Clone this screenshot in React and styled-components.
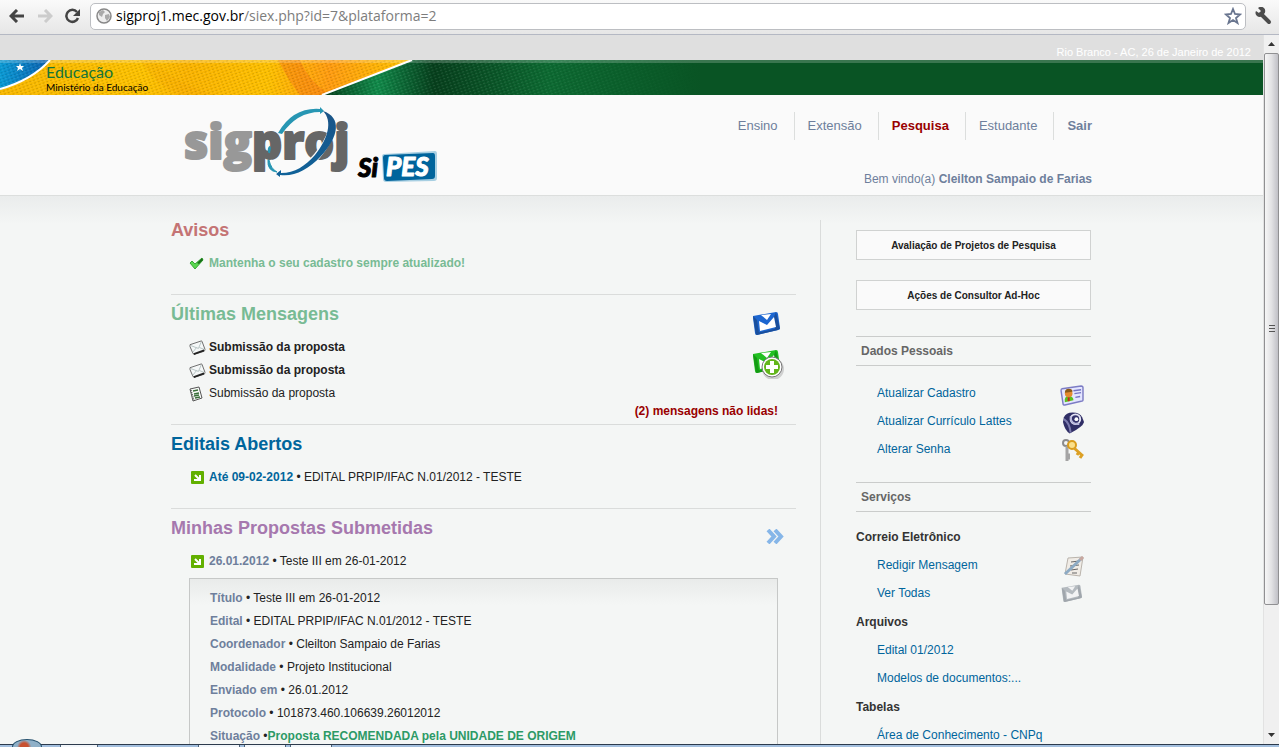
import React from 'react';
import styled, { createGlobalStyle } from 'styled-components';

const GlobalStyle = createGlobalStyle`
    * {
        box-sizing: border-box;
    }
    body {
        margin: 0;
        overflow: hidden;
        font-family: "Liberation Sans", Arial, sans-serif;
        font-size: 12px;
        line-height: 15px;
        color: #222;
    }
    ul, h1, h2, h3, p {
        margin: 0;
        padding: 0;
        list-style: none;
    }
    svg {
        display: block;
        flex: none;
    }
`

/* browser window */

const Window = styled.div`
    display: flex;
    flex-direction: column;
    height: 100vh;
`
const Toolbar = styled.div`
    display: flex;
    align-items: center;
    gap: 6px;
    height: 35px;
    flex: none;
    padding: 0 5px 2px 6px;
    background: linear-gradient(#fafafa, #e6e6e6);
    border-bottom: 1px solid #b4b8c3;
`
const ToolButton = styled.button`
    display: flex;
    align-items: center;
    justify-content: center;
    width: 22px;
    height: 24px;
    padding: 0;
    border: 0;
    background: none;
`
const AddressBar = styled.div`
    flex: 1;
    display: flex;
    align-items: center;
    height: 27px;
    padding: 0 1px 0 5px;
    background: #fff;
    border: 1px solid #bcbec2;
    border-radius: 5px;
    font: 14px/22px "Open Sans", "Noto Sans", sans-serif;
`
const Domain = styled.label`
    margin-left: 4px;
    color: #000;
`
const Path = styled.input`
    flex: 1;
    min-width: 0;
    padding: 0;
    border: 0;
    outline: 0;
    background: none;
    font: inherit;
    color: #7d7d7d;
`
const Viewport = styled.div`
    flex: 1;
    min-height: 0;
    display: flex;
`
const Page = styled.div`
    flex: 1;
    min-width: 0;
    overflow: hidden;
    background: #f4f6f5;
`
const Scrollbar = styled.div`
    flex: none;
    width: 16px;
    display: flex;
    flex-direction: column;
    background: #f0f0f0;
    border-left: 1px solid #e2e2e2;
`
const ScrollArrow = styled.button`
    display: flex;
    align-items: center;
    justify-content: center;
    height: 18px;
    padding: 0;
    border: 0;
    background: none;
`
const Track = styled.div`
    flex: 1;
`
const Thumb = styled.div`
    display: flex;
    align-items: center;
    justify-content: center;
    height: 82%;
    border: 1px solid #909092;
    border-radius: 2px;
    background: linear-gradient(90deg, #f6f6f6, #e2e2e4 50%, #c0c0c6);
`
const Taskbar = styled.div`
    position: relative;
    display: flex;
    gap: 4px;
    flex: none;
    height: 3px;
    padding-left: 60px;
    background: #a3bfde;
    border-top: 1px solid #2c3a4c;
`
const StartOrb = styled.div`
    position: absolute;
    left: 12px;
    bottom: 0;
    width: 30px;
    height: 8px;
    border: 1px solid #24506e;
    border-bottom: 0;
    border-radius: 15px 15px 0 0 / 8px 8px 0 0;
    background: radial-gradient(circle at 40% 100%, #c85030 4px, #8fb0c8 7px);
`
const Task = styled.div`
    width: ${props => props.$wide ? '42px' : '38px'};
    background: #f2f6fa;
    border: solid #4c6278;
    border-width: 0 1px;

    &:nth-child(3) {
        margin-left: 96px;
    }
`

/* page header */

const DateBar = styled.div`
    height: 25px;
    padding: 10px 12px 0;
    background: #dfdfdf;
    color: #fff;
    font-size: 11px;
    text-align: right;
`
const Banner = styled.div`
    position: relative;
    height: 35px;
    overflow: hidden;
    background: #095424;
`
const BannerStripe = styled.div`
    position: absolute;
    inset: 0 0 auto;
    height: 3px;
    background: rgba(255, 255, 255, .2);
`
const Ministry = styled.div`
    position: absolute;
    left: 46px;
    top: 2px;
    font-family: Lato, sans-serif;
`
const MinistryArea = styled.p`
    font-size: 16px;
    line-height: 19px;
    color: #15743a;
`
const MinistryName = styled.p`
    font-size: 10px;
    line-height: 12px;
    color: #000;
`
const Header = styled.header`
    background: #fafafa;
    border-bottom: 1px solid #dcdedd;
`
const Container = styled.div`
    display: flex;
    justify-content: space-between;
    width: 921px;
    max-width: 100%;
    margin: 0 auto;
`
const HeaderRight = styled.div`
    display: flex;
    flex-direction: column;
    align-items: flex-end;
    justify-content: space-between;
    height: 100px;
    padding: 17px 0 8px;
`
const Nav = styled.nav`
    display: flex;
`
const NavLink = styled.a`
    padding: 0 16px 0 13px;
    font-size: 13px;
    line-height: 28px;
    text-decoration: none;
    font-weight: ${props => props.$bold ? 'bold' : 'normal'};
    color: ${props => props.$active ? '#990000' : '#6e7f9c'};

    & + & {
        border-left: 1px solid #dcdedd;
    }
    &:last-child {
        padding-right: 0;
    }
`
const Welcome = styled.p`
    color: #6e7f9c;
`

/* columns */

const Body = styled.div`
    background: linear-gradient(#eaecec, #f4f6f5 28px);
    padding-top: 24px;
`
const Main = styled.main`
    flex: 1;
    margin-right: 24px;
`
const Sidebar = styled.aside`
    width: 272px;
    flex: none;
    padding: 10px 1px 0 35px;
    border-left: 1px solid #dadcdb;
`
const Section = styled.section`
    display: flex;
    justify-content: space-between;
    height: ${props => props.$height};
    border-bottom: ${props => props.$last ? '0' : '1px solid #dadcdb'};
    padding-top: ${props => props.$first ? '0' : '9px'};
`
const Title = styled.h2`
    font-size: 18px;
    line-height: 20px;
    color: ${props => props.color};
    margin-bottom: 12px;
`
const Item = styled.li`
    display: flex;
    align-items: center;
    gap: 4px;
    height: 23px;
    padding-left: 18px;
    font-weight: ${props => props.$bold ? 'bold' : 'normal'};
    color: ${props => props.color || '#222'};
`
const IconCell = styled.span`
    display: flex;
    width: 16px;
`
const Label = styled.b`
    color: ${props => props.color || '#6e7f9c'};
`
const SectionActions = styled.div`
    display: flex;
    flex-direction: column;
    align-items: flex-end;
    justify-content: space-between;
    padding: ${props => props.$low ? '11px' : '7px'} 12px 5px 0;
`
const ActionIcons = styled.div`
    display: flex;
    flex-direction: column;
    gap: 8px;
`
const Unread = styled.p`
    margin-right: 6px;
    color: #990000;
    font-weight: bold;
`
const Proposal = styled.ul`
    margin: 5px 18px 0;
    padding: 8px 20px 20px;
    border: 1px solid #c6c8c7;
    background: linear-gradient(#e9ebea, #f4f6f5 26px);
    line-height: 23px;
`

const BoxButton = styled.button`
    display: block;
    width: 100%;
    height: 30px;
    margin-bottom: 20px;
    padding: 0;
    border: 1px solid #d0d2d1;
    background: #fafafa;
    color: #222;
    font: bold 10px "Liberation Sans", Arial, sans-serif;
`
const SideTitle = styled.h2`
    height: 30px;
    margin: ${props => props.$margin};
    padding-left: 5px;
    border: solid #cacccb;
    border-width: 1px 0;
    font-size: 12px;
    line-height: 28px;
    color: #666;
`
const SideGroup = styled.h3`
    font-size: 12px;
    line-height: 28px;
    color: #333;
`
const Links = styled.ul`
    padding-bottom: 1px;
`
const SideItem = styled.li`
    display: flex;
    align-items: center;
    justify-content: space-between;
    height: 28px;
    padding: 0 6px 0 21px;
`
const SideLink = styled.a`
    color: #00659c;
    text-decoration: none;
`
const SideIcon = styled.span`
    padding-top: 4px;
`

const BannerArt = () => (
    <svg width="760" height="35" viewBox="0 0 760 35">
        <defs>
            <linearGradient id="yellow">
                <stop offset="0" stopColor="#f8b800" />
                <stop offset=".35" stopColor="#fdc200" />
                <stop offset=".45" stopColor="#fbb400" />
                <stop offset=".65" stopColor="#fdc000" />
                <stop offset=".8" stopColor="#ff9c10" />
                <stop offset="1" stopColor="#fdc400" />
            </linearGradient>
            <linearGradient id="green" gradientUnits="userSpaceOnUse" x1="320" y1="20" x2="700" y2="0">
                <stop offset="0" stopColor="#063c1a" />
                <stop offset=".15" stopColor="#118a4a" />
                <stop offset=".3" stopColor="#07401d" />
                <stop offset=".6" stopColor="#0d6a32" />
                <stop offset="1" stopColor="#095424" />
            </linearGradient>
            <linearGradient id="blue">
                <stop offset="0" stopColor="#0a9ad4" />
                <stop offset="1" stopColor="#0c5fae" />
            </linearGradient>
            <linearGradient id="fade">
                <stop offset=".7" stopColor="#fff" />
                <stop offset="1" stopColor="#000" />
            </linearGradient>
            <mask id="weaveMask"><rect width="700" height="35" fill="url(#fade)" /></mask>
            <pattern id="weave" width="4" height="3" patternUnits="userSpaceOnUse" patternTransform="rotate(-20)">
                <rect width="2" height="1" fill="#000" opacity=".14" />
                <rect x="2" y="1" width="2" height="1" fill="#fff" opacity=".1" />
            </pattern>
        </defs>
        <rect width="760" height="35" fill="url(#green)" />
        <path d="M0 0H412L322 35H0Z" fill="url(#yellow)" />
        <path d="M278 0H300Q308 20 326 32L322 35H300Q288 20 278 0Z" fill="#f47a10" opacity=".5" />
        <path d="M155 0Q170 22 215 35H180Q155 25 140 0Z" fill="#f5a400" opacity=".25" />
        <path d="M0 0H50Q32 20 0 30Z" fill="url(#blue)" />
        <rect width="700" height="35" fill="url(#weave)" mask="url(#weaveMask)" />
        <path d="M50 0Q32 20 0 29M412 0L322 35" fill="none" stroke="#fff" strokeWidth="2" />
        <path d="M20 3l1 3h3l-2 2 1 3-3-2-3 2 1-3-2-2h3z" fill="#fff" />
    </svg>
)

const Logo = () => (
    <svg width="276" height="100" viewBox="0 0 276 100" role="img" aria-label="SigProj SiPES">
        <defs>
            <linearGradient id="gray" x2="0" y2="1">
                <stop offset="0" stopColor="#8a8a8a" />
                <stop offset="1" stopColor="#a2a2a2" />
            </linearGradient>
            <linearGradient id="ring" x2="0" y2="1">
                <stop offset="0" stopColor="#1b5487" />
                <stop offset="1" stopColor="#0f6299" />
            </linearGradient>
        </defs>
        <g fontFamily="Open Sans" fontWeight="800" fontSize="47" strokeWidth="2" strokeLinejoin="round">
            <text x="13" y="64" fill="#989898" stroke="#989898">sig<tspan fill="#666" stroke="#666">proj</tspan></text>
        </g>
        <path d="M108 36Q124 14 148 15" fill="none" stroke="#fafafa" strokeWidth="7" />
        <path d="M107 38Q122 12 149 14V12l4 4-4 3v-2Q126 17 111 39Z" fill="#2796b3" />
        <path d="M156 19C166 28 160 44 146 61C135 74 122 80 108 79" fill="none" stroke="#fafafa" strokeWidth="7" />
        <path d="M152 16C171 22 168 42 150 61C137 75 123 82 109 80V82l-4-3 5-4v3C124 78 134 71 144 60C157 44 162 26 152 16Z" fill="url(#ring)" />
        <path d="M98 65Q99 74 106 77" fill="none" stroke="#fafafa" strokeWidth="6" />
        <path d="M98 65Q100 74 106 77Q96 76 97 65Z" fill="#2796b3" stroke="#2796b3" />
        <path d="M97 53q2-4 3 0l-1 5q-3 1-2-5z" fill="#2796b3" />
        <path d="M213 59L264 56Q266 56 266 59V83Q266 86 263 86L215 87Q212 87 212 84L211 62Q211 59 213 59Z" fill="#a8cfe2" />
        <path d="M214 60L262 58Q264 58 264 61V81Q264 84 261 84L216 86Q213 86 213 83L212 63Q212 60 214 60Z" fill="#00649c" />
        <g fontFamily="Lato" fontWeight="900" fontStyle="italic" strokeLinejoin="round">
            <text x="187" y="82" fontSize="26" fill="#000" stroke="#000">Si</text>
            <text x="215" y="81" fontSize="26" fill="#fff" stroke="#fff">PES</text>
        </g>
    </svg>
)

const Envelope = () => (
    <svg width="17" height="15" viewBox="0 0 18 16">
        <path d="M1 5L13 1Q14 1 14 2L17 10Q17 11 16 12L6 15Q4 15 4 14L1 7Z" fill="#f5f8f8" stroke="#666" />
        <path d="M2 6l8 3 3-7M4 13l4-5M16 10l-5-2" fill="none" stroke="#b4c2c2" />
        <path d="M5 15l11-4" stroke="#222" strokeWidth="2" />
    </svg>
)
const Sheet = () => (
    <svg width="14" height="16" viewBox="0 0 14 16">
        <path d="M1 3L10 1L13 12L4 15Z" fill="#f8faf8" stroke="#555" />
        <path d="M4 5l5-1M5 8l5-1M5 10l5-1M6 12l5-1" stroke="#3a6e3a" strokeWidth="1.5" />
        <path d="M2 4l3 10" stroke="#333" strokeDasharray="1 1" />
    </svg>
)
const Check = () => (
    <svg width="15" height="13" viewBox="0 0 15 13">
        <path d="M1 6L3 4L6 7L13 1L14 3L6 12Z" fill="#5ad850" stroke="#3aa838" />
        <path d="M8 6l5-5 1 2-4 4z" fill="#187018" />
    </svg>
)
const GreenArrow = () => (
    <svg width="15" height="13" viewBox="0 0 15 13">
        <rect x="2" width="13" height="13" rx="1" fill="#62b000" />
        <path d="M6 4l5 5M11 4v5H5" fill="none" stroke="#fff" strokeWidth="2" />
    </svg>
)
const MailTile = ({ dark, light, plus, size = 32, inner = '#fff' }) => (
    <svg width={size} height={size * 30 / 32} viewBox="0 0 32 30">
        <path d="M1 5L24 1Q26 1 26 3L28 17Q28 19 26 19L5 24Q3 24 3 22L1 7Z" fill={light} />
        <path d="M1 5L5 9L7 22L4 24Z" fill={dark} />
        <path d="M24 1L28 18L23 19L22 6Z" fill={dark} />
        <path d="M4 22L27 17L26 19L5 24Z" fill={dark} />
        <path d="M7 10L15 14L22 6L24 16L8 20Z" fill={inner} />
        <path d="M9 4L19 3L15 9Z" fill={inner} />
        {plus && <g>
            <circle cx="21" cy="20" r="11" fill="#999" opacity=".4" />
            <circle cx="20" cy="18" r="10" fill="#fff" stroke="#777" />
            <circle cx="20" cy="18" r="8" fill="#62b51b" />
            <path d="M20 12v12M14 18h12" stroke="#fff" strokeWidth="4" />
        </g>}
    </svg>
)
const Chevrons = () => (
    <svg width="18" height="15" viewBox="0 0 18 15">
        <path d="M2 1l6 6.500-6 6.500M9 1l6 6.500-6 6.500" fill="none" stroke="#86b6e8" strokeWidth="4" />
    </svg>
)
const IdCard = () => (
    <svg width="25" height="21" viewBox="0 0 26 22">
        <path d="M2 4L22 1Q24 1 24 3V16Q24 17 22 17L5 21Q3 21 3 19L1 6Q1 4 2 4Z" fill="#e4e6ff" stroke="#7c7cc4" strokeWidth="1.500" />
        <path d="M5 18q-1-6 4-7 5 1 5 5z" fill="#5cc020" />
        <circle cx="9" cy="9" r="4" fill="#e48a30" />
        <path d="M5 8q0-4 4-4t4 3z" fill="#8b5a18" />
        <path d="M9 13v4" stroke="#d02020" strokeWidth="2" />
        <path d="M14 6l8-1M15 9l7-1M16 13l5-1" stroke="#7474c4" strokeWidth="1.500" />
    </svg>
)
const Lattes = () => (
    <svg width="23" height="24" viewBox="0 0 24 24">
        <path d="M2 6Q4 1 11 1Q19 1 21 6L23 11Q22 16 8 23Q3 20 1 11Z" fill="#302f66" />
        <path d="M2 8q6 4 7 14" fill="none" stroke="#7c7cae" strokeWidth="2" />
        <circle cx="14" cy="8" r="5" fill="#34336c" stroke="#e4e4f4" strokeWidth="2" />
        <path d="M9 5q0 9 9 8" fill="none" stroke="#b8b8dc" strokeWidth="2" />
        <circle cx="15" cy="8" r="2" fill="#fff" />
    </svg>
)
const Keys = () => (
    <svg width="24" height="24" viewBox="0 0 24 24">
        <circle cx="5" cy="4" r="3" fill="none" stroke="#8c8c8c" strokeWidth="2" />
        <path d="M6 7v15M6 19h3M6 16h3" stroke="#a4a4a4" strokeWidth="3" />
        <circle cx="11" cy="6" r="4" fill="#fbe08a" stroke="#d99c1c" strokeWidth="2" />
        <path d="M13 9l9 8M18 13l-2 3M21 16l-2 3" stroke="#dca024" strokeWidth="3" />
    </svg>
)
const Notepad = () => (
    <svg width="22" height="22" viewBox="0 0 22 22">
        <path d="M5 2L20 1L17 20L2 18Z" fill="#f0ece6" stroke="#bab4ac" />
        <path d="M8 6l8-1M7 10l9-1M8 14l7-1M9 17l5 0" stroke="#666" />
        <path d="M2 18L19 2" stroke="#8caac4" strokeWidth="3" />
        <path d="M17 4l3-3" stroke="#c8a8a0" strokeWidth="3" />
    </svg>
)

const Triangle = ({ up }) => (
    <svg width="7" height="4" viewBox="0 0 7 4">
        <path d={up ? 'M0 4L3.500 0L7 4Z' : 'M0 0L3.500 4L7 0Z'} fill="#333" />
    </svg>
)

const navigation = [
    { name: 'Ensino' },
    { name: 'Extensão' },
    { name: 'Pesquisa', active: true, bold: true },
    { name: 'Estudante' },
    { name: 'Sair', bold: true },
];

const messages = [
    { text: 'Submissão da proposta', unread: true },
    { text: 'Submissão da proposta', unread: true },
    { text: 'Submissão da proposta' },
];

const proposal = [
    ['Título', 'Teste III em 26-01-2012'],
    ['Edital', 'EDITAL PRPIP/IFAC N.01/2012 - TESTE'],
    ['Coordenador', 'Cleilton Sampaio de Farias'],
    ['Modalidade', 'Projeto Institucional'],
    ['Enviado em', '26.01.2012'],
    ['Protocolo', '101873.460.106639.26012012'],
];

const personal = [
    { name: 'Atualizar Cadastro', icon: <IdCard /> },
    { name: 'Atualizar Currículo Lattes', icon: <Lattes /> },
    { name: 'Alterar Senha', icon: <Keys /> },
];

const services = [
    {
        name: 'Correio Eletrônico',
        links: [
            { name: 'Redigir Mensagem', icon: <Notepad /> },
            { name: 'Ver Todas', icon: <MailTile size={24} dark="#a0a6ac" light="#b4babf" inner="#f2f3f4" /> },
        ],
    },
    { name: 'Arquivos', links: [{ name: 'Edital 01/2012' }, { name: 'Modelos de documentos:...' }] },
    { name: 'Tabelas', links: [{ name: 'Área de Conhecimento - CNPq' }] },
];

const SideList = ({ links }) => (
    <Links>
        {links.map(link => (
            <SideItem key={link.name}>
                <SideLink href="#">{link.name}</SideLink>
                {link.icon && <SideIcon>{link.icon}</SideIcon>}
            </SideItem>
        ))}
    </Links>
)

const BrowserToolbar = () => (
    <Toolbar>
        <ToolButton aria-label="Voltar">
            <svg width="16" height="14" viewBox="0 0 16 14"><path d="M15 7H3M8 1L2 7l6 6" fill="none" stroke="#444" strokeWidth="3" /></svg>
        </ToolButton>
        <ToolButton aria-label="Avançar">
            <svg width="16" height="14" viewBox="0 0 16 14"><path d="M1 7h12M8 1l6 6-6 6" fill="none" stroke="#ccc" strokeWidth="3" /></svg>
        </ToolButton>
        <ToolButton aria-label="Recarregar">
            <svg width="16" height="16" viewBox="0 0 16 16">
                <path d="M13 10A6 6 0 1 1 12 4" fill="none" stroke="#444" strokeWidth="2.500" />
                <path d="M15 1v7H8Z" fill="#444" />
            </svg>
        </ToolButton>
        <AddressBar>
            <svg width="16" height="16" viewBox="0 0 16 16">
                <circle cx="8" cy="8" r="7" fill="#eee" stroke="#888" strokeWidth="1.500" />
                <path d="M3 4l4-2 2 2-2 2-1 3-3-2zM9 7l4-1 1 3-3 4-2-3z" fill="#aaa" />
            </svg>
            <Domain htmlFor="path">sigproj1.mec.gov.br</Domain>
            <Path id="path" defaultValue="/siex.php?id=7&plataforma=2" />
            <ToolButton aria-label="Favorito">
                <svg width="18" height="18" viewBox="0 0 18 18">
                    <path d="M9 2l2 5 5 .5-4 3.500 1.500 5L9 13l-4.500 3L6 11 2 7.500 7 7z" fill="#fff" stroke="#69758f" strokeWidth="1.800" />
                </svg>
            </ToolButton>
        </AddressBar>
        <ToolButton aria-label="Ferramentas">
            <svg width="18" height="18" viewBox="0 0 18 18">
                <path d="M7 7l8 8" stroke="#4c4c4c" strokeWidth="4" strokeLinecap="round" />
                <path d="M4 1l3 3-2 2-3-2a4 4 0 0 0 6 5l2-2a4 4 0 0 0-6-6z" fill="#4c4c4c" />
            </svg>
        </ToolButton>
    </Toolbar>
)

const App = () => {
    return (
        <Window>
            <GlobalStyle />
            <BrowserToolbar />
            <Viewport>
                <Page>
                    <DateBar>Rio Branco - AC, 26 de Janeiro de 2012</DateBar>
                    <Banner>
                        <BannerArt />
                        <BannerStripe />
                        <Ministry>
                            <MinistryArea>Educação</MinistryArea>
                            <MinistryName>Ministério da Educação</MinistryName>
                        </Ministry>
                    </Banner>
                    <Header>
                        <Container>
                            <Logo />
                            <HeaderRight>
                                <Nav>
                                    {navigation.map(item => (
                                        <NavLink key={item.name} href="#" $active={item.active} $bold={item.bold}>{item.name}</NavLink>
                                    ))}
                                </Nav>
                                <Welcome>Bem vindo(a) <b>Cleilton Sampaio de Farias</b></Welcome>
                            </HeaderRight>
                        </Container>
                    </Header>
                    <Body>
                        <Container>
                            <Main>
                                <Section $first $height="75px">
                                    <div>
                                        <Title color="#c47474">Avisos</Title>
                                        <ul>
                                            <Item $bold color="#78bb94"><IconCell><Check /></IconCell>Mantenha o seu cadastro sempre atualizado!</Item>
                                        </ul>
                                    </div>
                                </Section>
                                <Section $height="130px">
                                    <div>
                                        <Title color="#78bb94">Últimas Mensagens</Title>
                                        <ul>
                                            {messages.map((message, index) => (
                                                <Item key={index} $bold={message.unread}>
                                                    <IconCell>{message.unread ? <Envelope /> : <Sheet />}</IconCell>
                                                    {message.text}
                                                </Item>
                                            ))}
                                        </ul>
                                    </div>
                                    <SectionActions>
                                        <ActionIcons>
                                            <MailTile dark="#1a4f9c" light="#1c66d0" />
                                            <MailTile dark="#149a14" light="#22c022" plus />
                                        </ActionIcons>
                                        <Unread>(2) mensagens não lidas!</Unread>
                                    </SectionActions>
                                </Section>
                                <Section $height="84px">
                                    <div>
                                        <Title color="#00659c">Editais Abertos</Title>
                                        <ul>
                                            <Item>
                                                <IconCell><GreenArrow /></IconCell>
                                                <span><Label color="#00659c">Até 09-02-2012</Label> • EDITAL PRPIP/IFAC N.01/2012 - TESTE</span>
                                            </Item>
                                        </ul>
                                    </div>
                                </Section>
                                <Section $last $height="64px">
                                    <div>
                                        <Title color="#a678ae">Minhas Propostas Submetidas</Title>
                                        <ul>
                                            <Item>
                                                <IconCell><GreenArrow /></IconCell>
                                                <span><Label>26.01.2012</Label> • Teste III em 26-01-2012</span>
                                            </Item>
                                        </ul>
                                    </div>
                                    <SectionActions $low>
                                        <Chevrons />
                                    </SectionActions>
                                </Section>
                                <Proposal>
                                    {proposal.map(([label, value]) => (
                                        <li key={label}><Label>{label}</Label> • {value}</li>
                                    ))}
                                    <li><Label>Situação</Label> •<Label color="#2c9a66">Proposta RECOMENDADA pela UNIDADE DE ORIGEM</Label></li>
                                </Proposal>
                            </Main>
                            <Sidebar>
                                <BoxButton>Avaliação de Projetos de Pesquisa</BoxButton>
                                <BoxButton>Ações de Consultor Ad-Hoc</BoxButton>
                                <SideTitle $margin="26px 0 13px">Dados Pessoais</SideTitle>
                                <SideList links={personal} />
                                <SideTitle $margin="18px 0 11px">Serviços</SideTitle>
                                {services.map(group => (
                                    <div key={group.name}>
                                        <SideGroup>{group.name}</SideGroup>
                                        <SideList links={group.links} />
                                    </div>
                                ))}
                            </Sidebar>
                        </Container>
                    </Body>
                </Page>
                <Scrollbar>
                    <ScrollArrow aria-label="Subir"><Triangle up /></ScrollArrow>
                    <Track>
                        <Thumb>
                            <svg width="6" height="8" viewBox="0 0 6 8"><path d="M0 .5h6M0 3.500h6M0 6.500h6" stroke="#555" /></svg>
                        </Thumb>
                    </Track>
                    <ScrollArrow aria-label="Descer"><Triangle /></ScrollArrow>
                </Scrollbar>
            </Viewport>
            <Taskbar>
                <StartOrb />
                <Task />
                <Task $wide />
                <Task $wide />
                <Task $wide />
            </Taskbar>
        </Window>
    );
};

export default App;
